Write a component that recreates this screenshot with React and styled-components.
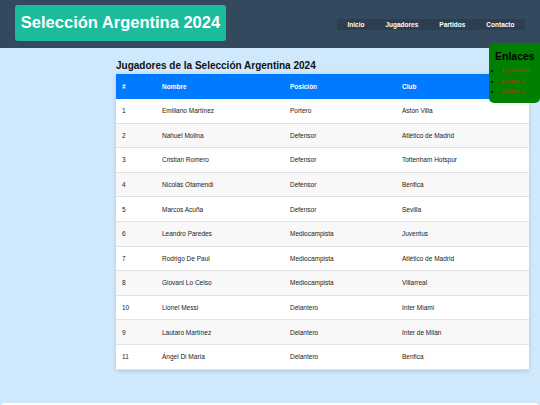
import React from "react";
import styled, { createGlobalStyle } from "styled-components";

const Global = createGlobalStyle`
  html, body { margin: 0; padding: 0; }
  body {
    background: #d0e8fc;
    font-family: "Liberation Sans", Arial, sans-serif;
    width: 540px;
    height: 405px;
    overflow: hidden;
    position: relative;
  }
`;

const Header = styled.header`
  background: #34495e;
  height: 48px;
  display: flex;
  align-items: center;
  justify-content: space-between;
  padding: 0 15px 0 15px;
  box-sizing: border-box;
`;

const Brand = styled.h1`
  margin: 0;
  margin-top: -3px;
  background: #1abc9c;
  color: #fff;
  font-size: 16.5px;
  font-weight: bold;
  white-space: nowrap;
  border-radius: 3px;
  height: 36px;
  width: 211px;
  box-sizing: border-box;
  display: flex;
  align-items: center;
  justify-content: center;
`;

const Nav = styled.nav`
  background: #2c3e50;
  display: flex;
  height: 11px;
  align-items: center;
  margin-top: 0;
`;

const NavLink = styled.a`
  color: #fff;
  font-size: 6.5px;
  font-weight: bold;
  text-decoration: none;
  padding: 0 10.5px;
`;

const Main = styled.main`
  margin: 0 11px 0 116px;
  padding-top: 13px;
`;

const Title = styled.h2`
  margin: 0 0 3px 0;
  font-size: 10px;
  font-weight: bold;
  color: #111;
  line-height: 10px;
`;

const Table = styled.table`
  width: 413px;
  border-collapse: collapse;
  background: #fff;
  box-shadow: 0 1px 4px rgba(0, 0, 0, 0.15);
  table-layout: fixed;
`;

const Th = styled.th`
  background: #007bff;
  color: #fff;
  font-size: 6.5px;
  font-weight: bold;
  text-align: left;
  height: 25px;
  padding: 0 0 0 6px;
`;

const Tr = styled.tr`
  background: ${(p) => (p.$alt ? "#f8f8f8" : "#fff")};
  border-bottom: 1px solid #e2e2e2;
`;

const Td = styled.td`
  font-size: 6.5px;
  color: #222;
  height: 23.6px;
  padding: 0 0 0 6px;
`;

const Aside = styled.aside`
  position: absolute;
  top: 43px;
  right: 0;
  width: 51px;
  height: 60px;
  background: #008000;
  border-radius: 5px 0 5px 5px;
  box-sizing: border-box;
  padding: 8px 0 0 6px;
`;

const AsideTitle = styled.h3`
  margin: 0 0 3px 0;
  font-size: 10.5px;
  font-weight: bold;
  color: #000;
  line-height: 11px;
`;

const LinkList = styled.ul`
  margin: 0;
  padding: 0;
  list-style: disc;
  list-style-position: outside;
  margin-left: 1px;
  padding-left: 5px;
`;

const LinkItem = styled.li`
  font-size: 6px;
  line-height: 10.5px;
  color: #000;
`;

const ListLink = styled.a`
  color: #b0380c;
  text-decoration: none;
`;

const Footer = styled.footer`
  position: absolute;
  left: 1px;
  right: 1px;
  top: 403px;
  height: 20px;
  background: #fff;
  border-radius: 4px;
`;

const players = [
  ["1", "Emiliano Martínez", "Portero", "Aston Villa"],
  ["2", "Nahuel Molina", "Defensor", "Atlético de Madrid"],
  ["3", "Cristian Romero", "Defensor", "Tottenham Hotspur"],
  ["4", "Nicolás Otamendi", "Defensor", "Benfica"],
  ["5", "Marcos Acuña", "Defensor", "Sevilla"],
  ["6", "Leandro Paredes", "Mediocampista", "Juventus"],
  ["7", "Rodrigo De Paul", "Mediocampista", "Atlético de Madrid"],
  ["8", "Giovani Lo Celso", "Mediocampista", "Villarreal"],
  ["10", "Lionel Messi", "Delantero", "Inter Miami"],
  ["9", "Lautaro Martínez", "Delantero", "Inter de Milán"],
  ["11", "Ángel Di María", "Delantero", "Benfica"],
];

export default function App() {
  return (
    <>
      <Global />
      <Header>
        <Brand>Selección Argentina 2024</Brand>
        <Nav>
          <NavLink href="#">Inicio</NavLink>
          <NavLink href="#">Jugadores</NavLink>
          <NavLink href="#">Partidos</NavLink>
          <NavLink href="#">Contacto</NavLink>
        </Nav>
      </Header>
      <Main>
        <Title>Jugadores de la Selección Argentina 2024</Title>
        <Table>
          <colgroup>
            <col style={{ width: "40px" }} />
            <col style={{ width: "128px" }} />
            <col style={{ width: "112px" }} />
            <col />
          </colgroup>
          <thead>
            <tr>
              <Th>#</Th>
              <Th>Nombre</Th>
              <Th>Posición</Th>
              <Th>Club</Th>
            </tr>
          </thead>
          <tbody>
            {players.map((p, i) => (
              <Tr key={i} $alt={i % 2 === 1}>
                {p.map((c, j) => (
                  <Td key={j}>{c}</Td>
                ))}
              </Tr>
            ))}
          </tbody>
        </Table>
      </Main>
      <Aside>
        <AsideTitle>Enlaces</AsideTitle>
        <LinkList>
          <LinkItem><ListLink href="#">Jugadores</ListLink></LinkItem>
          <LinkItem><ListLink href="#">Enlace 2</ListLink></LinkItem>
          <LinkItem><ListLink href="#">Enlace 3</ListLink></LinkItem>
        </LinkList>
      </Aside>
      <Footer />
    </>
  );
}
